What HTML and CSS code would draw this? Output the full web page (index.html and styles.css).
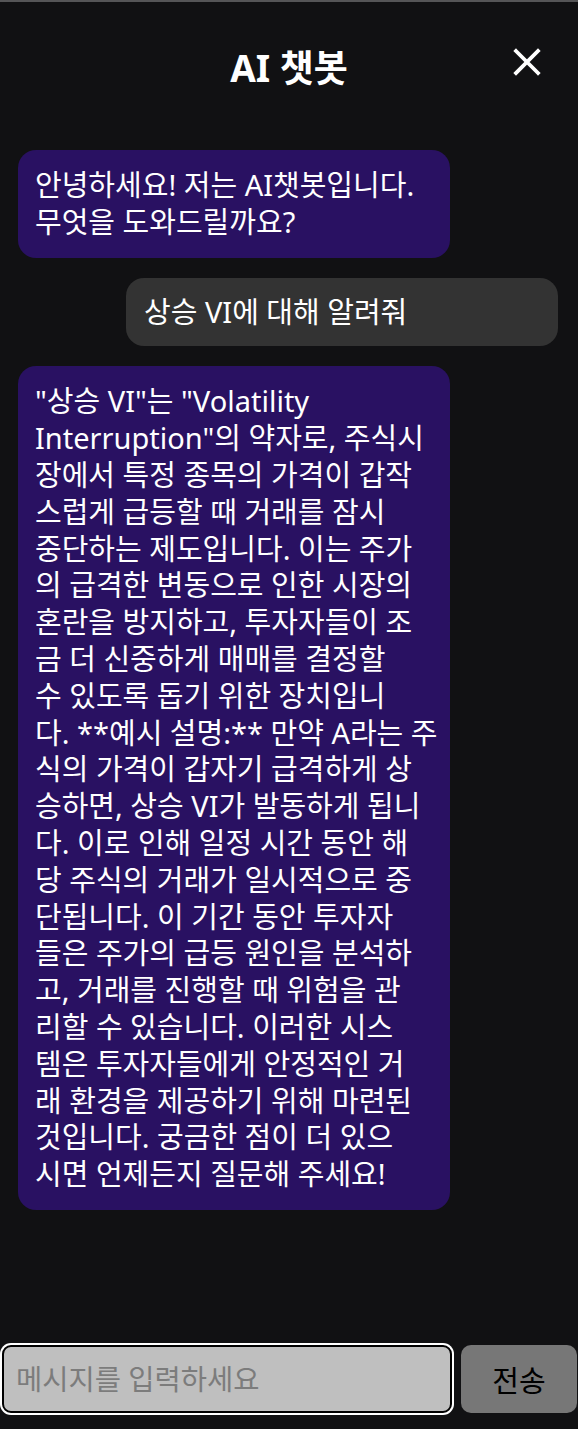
FILE: index.html
```html
<!DOCTYPE html>
<html lang="ko">
<head>
<meta charset="utf-8">
<title>AI 챗봇</title>
<link rel="stylesheet" href="styles.css">
</head>
<body>
<div class="app">
  <div class="topbar"></div>
  <header class="header">
    <span class="spacer"></span>
    <h1 class="title">AI 챗봇</h1>
    <button class="close" type="button" aria-label="닫기">
      <svg width="28" height="28" viewBox="0 0 28 28"><path d="M3 3 L25 25 M25 3 L3 25" stroke="#fff" stroke-width="3.8" stroke-linecap="square" fill="none"/></svg>
    </button>
  </header>
  <main class="messages">
    <div class="msg bot">안녕하세요! 저는 AI챗봇입니다.<br>무엇을 도와드릴까요?</div>
    <div class="msg user">상승 VI에 대해 알려줘</div>
    <div class="msg bot">"상승 VI"는 "Volatility<br>Interruption"의 약자로, 주식시<br>장에서 특정 종목의 가격이 갑작<br>스럽게 급등할 때 거래를 잠시<br>중단하는 제도입니다. 이는 주가<br>의 급격한 변동으로 인한 시장의<br>혼란을 방지하고, 투자자들이 조<br>금 더 신중하게 매매를 결정할<br>수 있도록 돕기 위한 장치입니<br>다. **예시 설명:** 만약 A라는 주<br>식의 가격이 갑자기 급격하게 상<br>승하면, 상승 VI가 발동하게 됩니<br>다. 이로 인해 일정 시간 동안 해<br>당 주식의 거래가 일시적으로 중<br>단됩니다. 이 기간 동안 투자자<br>들은 주가의 급등 원인을 분석하<br>고, 거래를 진행할 때 위험을 관<br>리할 수 있습니다. 이러한 시스<br>템은 투자자들에게 안정적인 거<br>래 환경을 제공하기 위해 마련된<br>것입니다. 궁금한 점이 더 있으<br>시면 언제든지 질문해 주세요!</div>
  </main>
  <form class="composer">
    <input class="input" type="text" placeholder="메시지를 입력하세요">
    <button class="send" type="button">전송</button>
  </form>
</div>
</body>
</html>
```
FILE: styles.css
```css
* { box-sizing: border-box; }
html, body {
  margin: 0;
  padding: 0;
  background: #111113;
}
body {
  font-family: "Noto Sans", "Noto Sans CJK KR", sans-serif;
  color: #fff;
}
.app {
  height: 1429px;
  display: flex;
  flex-direction: column;
}
.topbar {
  height: 2px;
  background: #555557;
}
.header {
  display: grid;
  grid-template-columns: 1fr auto 1fr;
  align-items: center;
  padding: 40px 0 14px;
}
.title {
  margin: 0;
  font-family: "Noto Sans", "Noto Sans CJK KR", sans-serif;
  font-weight: 700;
  font-size: 37px;
  line-height: 52px;
  color: #fff;
}
.close {
  justify-self: end;
  margin-right: 36px;
  margin-bottom: 12px;
  width: 30px;
  height: 30px;
  padding: 1px;
  border: 0;
  background: none;
  display: flex;
  align-items: center;
  justify-content: center;
}
.messages {
  flex: 1;
  display: flex;
  flex-direction: column;
  gap: 20px;
  padding: 42px 20px 0 18px;
}
.msg {
  width: 432px;
  font-size: 29px;
  line-height: 36.8px;
  border-radius: 18px;
  padding: 17px 6px 17px 17px;
  color: #fff;
}
.bot {
  align-self: flex-start;
  background: #291162;
}
.user {
  align-self: flex-end;
  background: #333333;
  padding: 16px 6px 16px 18px;
}
.composer {
  display: flex;
  align-items: center;
  gap: 9px;
  padding: 0 1px 16px 2px;
  margin: 0;
}
.input {
  width: 450px;
  height: 68px;
  border: 2px solid #000;
  border-radius: 9px;
  box-shadow: 0 0 0 2px #fff;
  background: #bfbfbf;
  padding: 0 12px;
  font-family: "Noto Sans", "Noto Sans CJK KR", sans-serif;
  font-size: 28.5px;
  color: #000;
  outline: none;
}
.input::placeholder {
  color: #7c7c7c;
}
.send {
  flex: 1;
  height: 68px;
  border: 0;
  border-radius: 10px;
  background: #777777;
  font-family: "Noto Sans", "Noto Sans CJK KR", sans-serif;
  font-size: 29px;
  color: #000;
}
```
